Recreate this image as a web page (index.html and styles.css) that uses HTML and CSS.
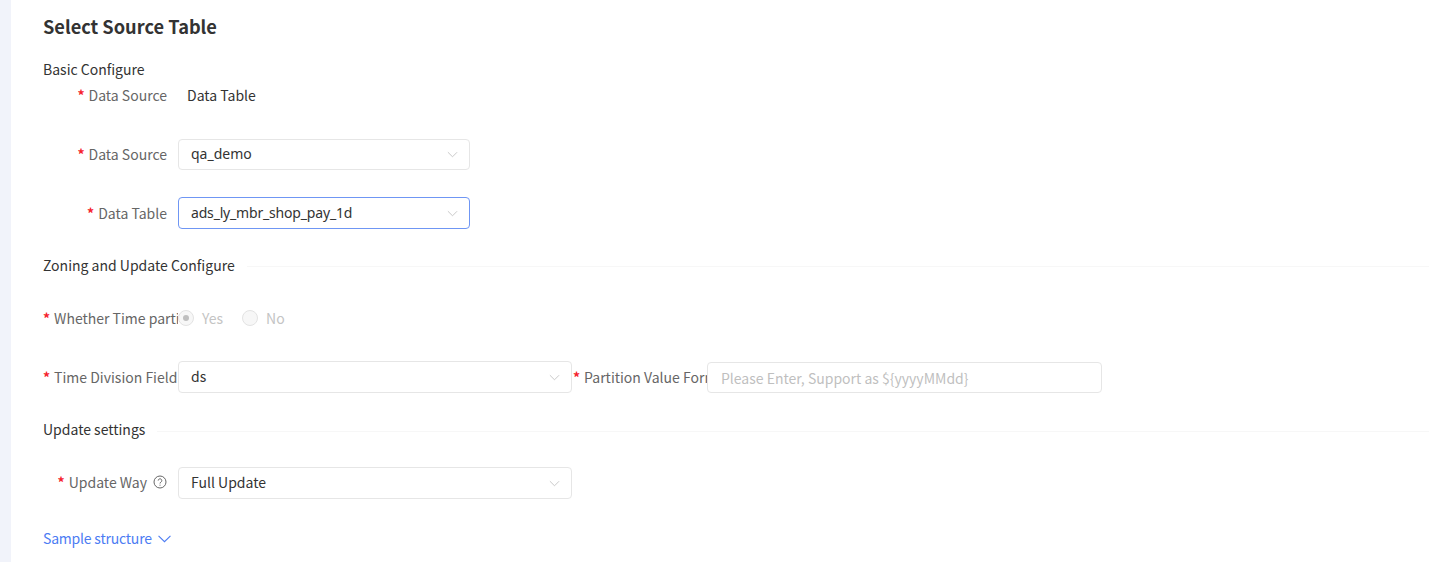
FILE: index.html
```html
<!DOCTYPE html>
<html lang="en">
<head>
<meta charset="utf-8">
<title>Select Source Table</title>
<link rel="stylesheet" href="styles.css">
</head>
<body>
<div class="page">
  <aside class="rail"></aside>
  <main class="content">
    <h1 class="title">Select Source Table</h1>
    <div class="section-head"><span>Basic Configure</span></div>
    <div class="row row-text">
      <label class="label"><i>*</i>Data Source</label>
      <span class="value">Data Table</span>
    </div>
    <div class="row row-a">
      <label class="label"><i>*</i>Data Source</label>
      <div class="select narrow short"><span class="latin">qa_demo</span><svg class="chev" viewBox="0 0 12 12"><path d="M1 3.5 6 8.5 11 3.5"/></svg></div>
    </div>
    <div class="row row-b">
      <label class="label"><i>*</i>Data Table</label>
      <div class="select narrow focus"><span class="latin tight">ads_ly_mbr_shop_pay_1d</span><svg class="chev" viewBox="0 0 12 12"><path d="M1 3.5 6 8.5 11 3.5"/></svg></div>
    </div>
    <div class="section-head zoning"><span>Zoning and Update Configure</span><b></b></div>
    <div class="row row-radio">
      <label class="label left"><i>*</i>Whether Time partition</label>
      <div class="radios">
        <span class="radio checked"></span><span class="radio-text">Yes</span>
        <span class="radio"></span><span class="radio-text">No</span>
      </div>
    </div>
    <div class="row row-time">
      <label class="label left"><i>*</i>Time Division Field</label>
      <div class="select wide"><span>ds</span><svg class="chev" viewBox="0 0 12 12"><path d="M1 3.5 6 8.5 11 3.5"/></svg></div>
      <label class="label left second"><i>*</i>Partition Value Format</label>
      <div class="input">Please Enter, Support as ${yyyyMMdd}</div>
    </div>
    <div class="section-head update"><span>Update settings</span><b></b></div>
    <div class="row row-way">
      <label class="label"><i>*</i>Update Way<svg class="help" viewBox="0 0 14 14"><circle cx="7" cy="7" r="6"/><path d="M5.2 5.6a1.8 1.8 0 1 1 2.8 1.5c-.7.4-1 .7-1 1.4"/><path d="M7 9.700v1"/></svg></label>
      <div class="select wide"><span>Full Update</span><svg class="chev" viewBox="0 0 12 12"><path d="M1 3.5 6 8.5 11 3.5"/></svg></div>
    </div>
    <a class="sample">Sample structure<svg viewBox="0 0 12 12"><path d="M.5 3.5 6 9 11.500 3.500"/></svg></a>
  </main>
</div>
</body>
</html>
```
FILE: styles.css
```css
* { box-sizing: border-box; }
html, body { margin: 0; height: 100%; background: #fff; overflow: hidden; }
body { font-family: "Noto Sans CJK SC", "Noto Sans", "Liberation Sans", sans-serif; font-size: 14px; color: #333; }
.page { display: flex; height: 562px; }
.rail { width: 11px; flex: none; background: #f1f3fa; }
.content { flex: 1; padding: 0 0 0 32px; min-width: 0; }
.title { margin: 0; padding-top: 14px; height: 59px; font-size: 18.2px; line-height: 24px; font-weight: 700; color: #333; }
.section-head { display: flex; align-items: center; gap: 12px; line-height: 22px; height: 22px; color: #333; }
.section-head span { margin-bottom: 2px; }
.section-head b { flex: 1; height: 1px; background: #f7f7f7; }
.row { display: flex; align-items: center; height: 32px; }
.label { width: 135px; flex: none; padding-right: 11px; text-align: right; color: #666; white-space: nowrap; overflow: hidden; display: flex; justify-content: flex-end; align-items: center; line-height: 22px; }
.label i { color: #f5222d; font-style: normal; font-weight: 700; margin-right: 4px; }
.label.left { justify-content: flex-start; padding-right: 0; }
.label.second { padding-left: 1px; }
.row-text { height: 22px; margin-top: 4px; }
.row-text .label, .value { margin-bottom: 2px; }
.value { margin-left: 9px; color: #333; }
.row-a { margin-top: 32px; height: 31px; }
.row-a .label { margin-bottom: 2px; }
.row-b { margin-top: 27px; }
.zoning { margin-top: 26px; }
.row-radio { margin-top: 30px; height: 22px; }
.row-time { margin-top: 32px; align-items: flex-end; }
.row-time .label { align-self: center; }
.update { margin-top: 27px; }
.update span { margin-bottom: 4px; }
.row-way { margin-top: 25px; }
.row-way .label { margin-bottom: 2px; }
.select { height: 32px; border: 1px solid #e6e6e6; border-radius: 4px; background: #fff; display: flex; align-items: center; justify-content: space-between; padding: 0 11px 0 12px; color: #333; flex: none; }
.select span { margin-bottom: 2px; }
.short { height: 31px; }
.latin { font-family: "Noto Sans", "Liberation Sans", sans-serif; }
.tight { letter-spacing: -0.18px; }
.narrow { width: 292px; }
.wide { width: 394px; }
.focus { border-color: #6f96f4; }
.chev { width: 11px; height: 11px; fill: none; stroke: #c4c4c4; stroke-width: 1; }
.radios { display: flex; align-items: center; color: #c4c4c4; }
.radio { width: 16px; height: 16px; border: 1px solid #e3e3e3; border-radius: 50%; background: #f7f7f7; position: relative; }
.radio.checked::after { content: ""; position: absolute; left: 4px; top: 4px; width: 6px; height: 6px; border-radius: 50%; background: #bfbfbf; }
.radio-text { margin: 0 19px 0 8px; }
.input { width: 395px; flex: none; height: 31px; border: 1px solid #e6e6e6; border-radius: 4px; padding: 0 13px; display: flex; align-items: center; color: #bfbfbf; }
.help { width: 14px; height: 14px; margin-left: 6px; fill: none; stroke: #666; stroke-width: 1; flex: none; }
.sample { display: inline-flex; align-items: center; gap: 6px; margin-top: 28px; color: #4c7cf3; line-height: 22px; letter-spacing: -0.2px; }
.sample svg { width: 13px; height: 13px; fill: none; stroke: #4c7cf3; stroke-width: 1; }
```
